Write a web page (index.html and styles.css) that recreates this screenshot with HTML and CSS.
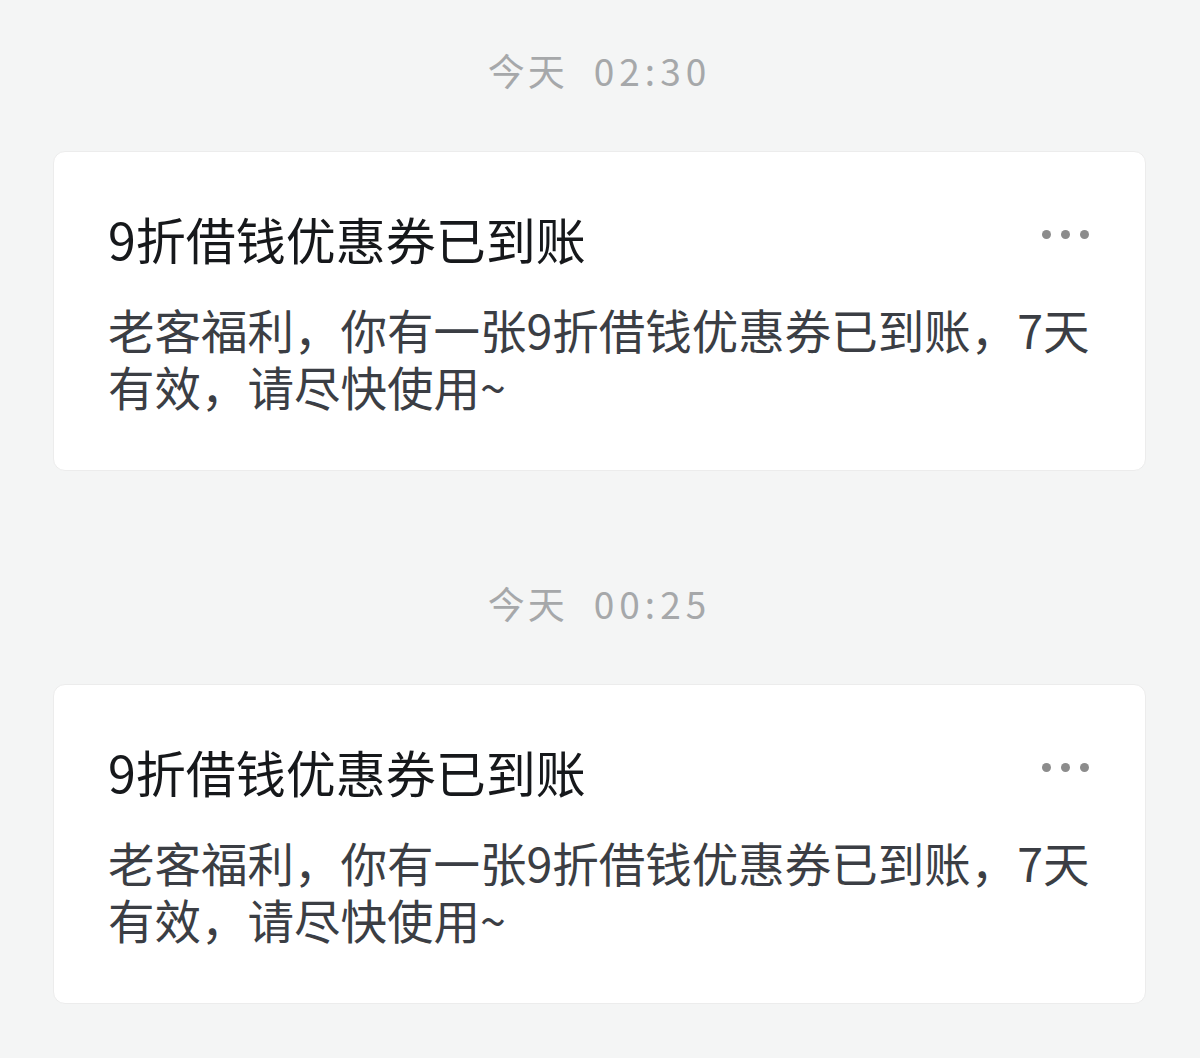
FILE: index.html
```html
<!DOCTYPE html>
<html lang="zh-CN">
<head>
<meta charset="UTF-8" />
<meta name="viewport" content="width=device-width, initial-scale=1" />
<title>消息</title>
<link rel="stylesheet" href="styles.css">
</head>
<body>
  <div class="list">
    <div class="msg">
      <div class="time"><span class="day">今天</span><span class="clock">02:30</span></div>
      <div class="card">
        <div class="card-head">
          <div class="title">9折借钱优惠券已到账</div>
          <div class="more"><span></span><span></span><span></span></div>
        </div>
        <div class="text">老客福利，你有一张9折借钱优惠券已到账，7天有效，请尽快使用~</div>
      </div>
    </div>

    <div class="msg">
      <div class="time"><span class="day">今天</span><span class="clock">00:25</span></div>
      <div class="card">
        <div class="card-head">
          <div class="title">9折借钱优惠券已到账</div>
          <div class="more"><span></span><span></span><span></span></div>
        </div>
        <div class="text">老客福利，你有一张9折借钱优惠券已到账，7天有效，请尽快使用~</div>
      </div>
    </div>
  </div>
</body>
</html>
```

FILE: styles.css
```css
body {
  margin: 0;
  background: #f4f5f5;
  font-family: "Noto Sans CJK SC", "Noto Sans", sans-serif;
  min-height: 100vh;
}
.list {
  display: flex;
  flex-direction: column;
  gap: 112px;
  padding: 50px 54px 0 53px;
}
.time {
  display: flex;
  justify-content: center;
  gap: 26px;
  font-size: 37px;
  line-height: 40px;
  color: #a6a8aa;
  letter-spacing: 3px;
  margin-bottom: 61px;
}
.clock {
  letter-spacing: 5px;
}
.card {
  background: #fff;
  border: 1px solid #ececec;
  border-radius: 12px;
  padding: 57px 54px 56px 54px;
}
.card-head {
  display: flex;
  justify-content: space-between;
  align-items: center;
}
.title {
  font-size: 50px;
  line-height: 58px;
  color: #16181b;
}
.more {
  display: flex;
  gap: 10px;
  margin-right: 2px;
  margin-top: -8px;
}
.more span {
  width: 9px;
  height: 9px;
  border-radius: 50%;
  background: #8c8c8c;
}
.text {
  margin-top: 33px;
  font-size: 46.5px;
  line-height: 57px;
  color: #3b3e44;
}
```
